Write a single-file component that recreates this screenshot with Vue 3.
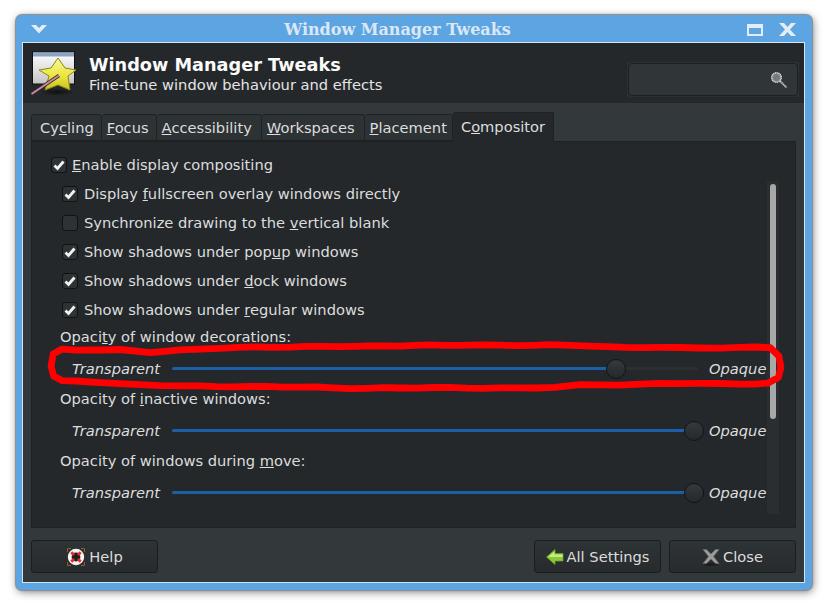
<script setup>
const tabs = [
  ['Cy', 'c', 'ling'],
  ['', 'F', 'ocus'],
  ['', 'A', 'ccessibility'],
  ['', 'W', 'orkspaces'],
  ['', 'P', 'lacement'],
  ['C', 'o', 'mpositor'],
]
const subChecks = [
  { parts: ['Display ', 'f', 'ullscreen overlay windows directly'], on: true },
  { parts: ['Synchronize drawing to the ', 'v', 'ertical blank'], on: false },
  { parts: ['Show shadows under pop', 'u', 'p windows'], on: true },
  { parts: ['Show shadows under ', 'd', 'ock windows'], on: true },
  { parts: ['Show shadows under ', 'r', 'egular windows'], on: true },
]
const sliders = [
  { parts: ['Opaci', 't', 'y of window decorations:'], value: 84.41 },
  { parts: ['Opacity of ', 'i', 'nactive windows:'], value: 99.24 },
  { parts: ['Opacity of windows during ', 'm', 'ove:'], value: 99.24 },
]

// Hand-drawn looking annotation: a base outline with a small deterministic wobble.
const base = [
  [90, 350], [62, 349], [53, 354], [51, 366], [54, 376], [62, 381], [90, 382], [120, 384], [160, 385], [200, 386],
  [250, 387], [300, 387], [350, 388], [400, 388], [450, 388], [500, 388], [555, 387], [580, 385], [620, 385], [660, 384],
  [700, 383], [740, 384], [768, 383], [778, 378], [781, 368], [779, 356], [770, 348], [740, 347], [700, 348], [660, 347],
  [625, 348], [590, 346], [550, 345], [500, 345], [460, 345], [400, 346], [340, 346], [290, 347], [220, 348], [180, 350],
  [150, 352], [120, 350], [90, 350],
]
const points = []
base.slice(1).forEach((p, i) => {
  const q = base[i]
  const steps = Math.max(1, Math.round(Math.hypot(p[0] - q[0], p[1] - q[1]) / 17))
  for (let s = 0; s < steps; s++) {
    const t = s / steps
    const n = points.length
    const x = q[0] + (p[0] - q[0]) * t + Math.sin(n * 2.3) * 0.3
    const y = q[1] + (p[1] - q[1]) * t + Math.sin(n * 1.7) * 0.4 + Math.sin(n * 0.61) * 0.3
    points.push(x.toFixed(1) + ' ' + y.toFixed(1))
  }
})
const markPath = 'M' + points.join('L') + 'Z'
</script>

<template>
  <div class="stage">
    <div class="window">
      <div class="titlebar">
        <svg class="tb-menu" width="16" height="9" viewBox="0 0 16 9"><path d="M0 0h5l3 3 3-3h5L8 8.500z" fill="#e4edf5"/></svg>
        <span class="tb-title">Window Manager Tweaks</span>
        <svg class="tb-max" width="16" height="12" viewBox="0 0 16 12"><path d="M0 0h16v12H0zM2 4v6h12V4z" fill="#e4edf5" fill-rule="evenodd"/></svg>
        <svg class="tb-close" width="17" height="13" viewBox="0 0 17 13"><path d="M0 0h5l3.500 4L12 0h5l-6 6.500 6 6.500h-5L8.500 9 5 13H0l6-6.500z" fill="#e4edf5"/></svg>
      </div>
      <div class="client">
        <header class="head">
          <svg class="head-icon" width="48" height="48" viewBox="0 0 48 48">
            <defs>
              <linearGradient id="pg" x1="0" y1="0" x2="0" y2="1"><stop offset="0" stop-color="#ffffff"/><stop offset="1" stop-color="#c4c4c4"/></linearGradient>
              <linearGradient id="sg" x1="0" y1="0" x2="0" y2="1"><stop offset="0" stop-color="#f8f6a0"/><stop offset=".55" stop-color="#ece63e"/><stop offset="1" stop-color="#c9c21e"/></linearGradient>
              <radialGradient id="sh"><stop offset="0" stop-color="#000" stop-opacity=".6"/><stop offset="1" stop-color="#000" stop-opacity="0"/></radialGradient>
            </defs>
            <ellipse cx="26" cy="41" rx="17" ry="4" fill="url(#sh)"/>
            <rect x="1.500" y="1" width="42" height="32" fill="url(#pg)" stroke="#0e0f10"/>
            <rect x="2" y="1.500" width="41" height="4" fill="#8ba3c4"/>
            <path d="M27 7l7 10 11 2-8 6 2 14-12-5-13 5 4-14-10-6 12-2z" fill="url(#sg)" stroke="#8b8514" stroke-width="1" stroke-linejoin="round"/>
            <path d="M.5 43L28 24.500" stroke="#3a2a30" stroke-width="3.600"/>
            <path d="M.5 43L28 24.500" stroke="#c98ba6" stroke-width="1.800"/>
          </svg>
          <div class="head-text">
            <div class="head-title">Window Manager Tweaks</div>
            <div class="head-sub">Fine-tune window behaviour and effects</div>
          </div>
          <div class="search">
            <div class="search-inner">
              <svg width="18" height="18" viewBox="0 0 18 18">
                <path d="M10 10l6.500 6.500" stroke="#c9c9c9" stroke-width="1.800" stroke-dasharray="1.500 .6"/>
                <circle cx="6.500" cy="6.500" r="4.700" fill="#777b7d" stroke="#d8d8d8" stroke-width="1.600" stroke-dasharray="1.300 .5"/>
              </svg>
            </div>
          </div>
        </header>

        <div class="body">
          <div class="tabs">
            <div v-for="(t, i) in tabs" :key="i" class="tab" :class="{ active: i === 5 }">{{ t[0] }}<u>{{ t[1] }}</u>{{ t[2] }}</div>
          </div>
          <div class="panel">
            <div class="scrollarea">
              <div class="opts">
                <label class="check top">
                  <span class="box"><svg width="14" height="12" viewBox="0 0 14 12"><path d="M2.500 6.500l3 3L11.500 2.500" fill="none" stroke="#f2f2f2" stroke-width="2.800"/></svg></span>
                  <span><u>E</u>nable display compositing</span>
                </label>
                <label v-for="(c, i) in subChecks" :key="i" class="check sub">
                  <span class="box"><svg v-if="c.on" width="14" height="12" viewBox="0 0 14 12"><path d="M2.500 6.500l3 3L11.500 2.500" fill="none" stroke="#f2f2f2" stroke-width="2.800"/></svg></span>
                  <span>{{ c.parts[0] }}<u>{{ c.parts[1] }}</u>{{ c.parts[2] }}</span>
                </label>
                <div v-for="(s, i) in sliders" :key="i" class="group">
                  <div class="group-label">{{ s.parts[0] }}<u>{{ s.parts[1] }}</u>{{ s.parts[2] }}</div>
                  <div class="slider-row">
                    <em class="end left">Transparent</em>
                    <div class="track">
                      <div class="fill" :style="{ width: s.value + '%' }"></div>
                      <div class="thumb" :style="{ left: s.value + '%' }"></div>
                    </div>
                    <em class="end right">Opaque</em>
                  </div>
                </div>
              </div>
              <div class="scrollbar"><div class="sb-thumb"></div></div>
            </div>
          </div>
          <div class="actions">
            <button class="btn">
              <svg width="20" height="20" viewBox="0 0 20 20">
                <path d="M1.500 5V1.500H5M15 1.500h3.500V5M1.500 15v3.500H5M15 18.500h3.500V15" fill="none" stroke="#8f6225"/>
                <circle cx="10" cy="10" r="6.300" fill="#1d1f20" stroke="#f4f4f4" stroke-width="3.800"/>
                <path d="M5.300 5.300l2.700 2.700M14.700 5.300L12 8M5.300 14.700L8 12M14.700 14.700L12 12" stroke="#ee2a2f" stroke-width="3"/>
              </svg>
              <span>Help</span>
            </button>
            <div class="spacer"></div>
            <button class="btn">
              <svg width="18" height="18" viewBox="0 0 18 18">
                <path d="M.5 9L9 1.500V5.500H17V13H9v3.500z" fill="#8ac83a" stroke="#6fa82a" stroke-width=".7"/>
                <path d="M2.500 8.500L8.500 3.500V6.500H16.500V9H3z" fill="#c6ee7e"/>
              </svg>
              <span>All Settings</span>
            </button>
            <button class="btn">
              <svg width="18" height="18" viewBox="0 0 18 18">
                <ellipse cx="9" cy="16.500" rx="7" ry="1.500" fill="#000" opacity=".35"/>
                <path d="M1 1.500h3.500L9 6l4.500-4.500H17L11.500 8.500 17 15.500h-3.500L9 11l-4.500 4.500H1l5.500-7z" fill="#9b9b99" stroke="#6a6a68" stroke-width=".7"/>
              </svg>
              <span>Close</span>
            </button>
          </div>
        </div>
      </div>
    </div>

    <svg class="mark" width="827" height="605" viewBox="0 0 827 605">
      <path :d="markPath" fill="none" stroke="#fe0000" stroke-width="6.800" stroke-linejoin="round"/>
    </svg>
  </div>
</template>

<style scoped>
.stage {
  position: relative;
  width: 827px;
  height: 605px;
  box-sizing: border-box;
  padding: 15px 15px 15px 16px;
  background: #ffffff;
  font-family: "DejaVu Sans", sans-serif;
  font-size: 14.67px;
  color: #dcdddd;
  overflow: hidden;
}
.window {
  width: 796px;
  height: 575px;
  box-sizing: border-box;
  display: flex;
  flex-direction: column;
  background: #5da4e3;
  border-radius: 6px;
  box-shadow: 0 0 1px 1px #8a8a8a, 1px 2px 8px rgba(0, 0, 0, .5);
}
.titlebar {
  height: 28px;
  flex: none;
  display: flex;
  align-items: center;
  padding: 0 17px 0 15px;
}
.tb-title {
  flex: 1;
  text-align: center;
  font-family: "DejaVu Serif", serif;
  font-weight: 700;
  font-size: 16px;
  color: #dbe8f3;
  padding-left: 1px;
}
.tb-menu { margin-top: 1px; }
.tb-max { margin-right: 16px; margin-top: 1px; }
.tb-close { margin-right: -1px; margin-top: 1px; }
.client {
  flex: 1;
  margin: 0 8px 8px 7px;
  outline: 1px solid #d3e4f3;
  display: flex;
  flex-direction: column;
  min-height: 0;
  background: #33383b;
}
.head {
  height: 60px;
  flex: none;
  background: #24282b;
  display: flex;
  align-items: center;
  padding: 0 5px 0 7px;
  box-sizing: border-box;
}
.head-icon { flex: none; margin-top: 4px; margin-left: 1px; }
.head-text { flex: 1; margin-left: 10px; margin-top: 3px; }
.head-title { font-weight: 700; font-size: 17.7px; line-height: 20px; color: #fbfbfb; }
.head-sub { font-size: 14.67px; line-height: 19px; color: #e4e4e4; }
.search {
  width: 172px;
  height: 35px;
  background: #2b3033;
  padding: 1px;
  box-sizing: border-box;
  margin-top: 13px;
}
.search-inner {
  height: 100%;
  box-sizing: border-box;
  background: #303538;
  border: 1px solid #1d2022;
  border-radius: 4px;
  display: flex;
  align-items: center;
  justify-content: flex-end;
  padding: 0 9px 0 0;
}
.body {
  flex: 1;
  min-height: 0;
  display: flex;
  flex-direction: column;
  padding: 8px 8px 9px;
}
.tabs {
  display: flex;
  align-items: flex-end;
  height: 30px;
  flex: none;
  position: relative;
  z-index: 1;
}
.tab {
  height: 27px;
  line-height: 26px;
  padding: 0 7px 0 5px;
  box-sizing: border-box;
  background: #2d3235;
  border: 1px solid #1f2225;
  border-left-width: 0;
  border-bottom-color: #1f2225;
  border-radius: 3px 3px 0 0;
  white-space: nowrap;
}
.tab:first-child { border-left-width: 1px; padding: 0 7px 0 8px; }
.tab:nth-child(3), .tab:nth-child(4) { padding-right: 9px; }
.tab:nth-child(5) { padding-right: 5px; }
.tab.active {
  height: 30px;
  line-height: 28px;
  padding: 0 8px;
  background: #24282b;
  border-bottom-color: #24282b;
  margin-bottom: -1px;
}
.panel {
  flex: 1;
  min-height: 0;
  background: #24282b;
  border: 1px solid #1f2225;
  padding: 13px 16px 13px 19px;
}
.scrollarea {
  height: 100%;
  display: flex;
  position: relative;
  overflow: hidden;
}
.opts { flex: 1; min-width: 0; }
.check {
  display: flex;
  align-items: center;
  height: 29px;
  white-space: nowrap;
}
.top { margin-top: -5px; }
.sub { padding-left: 11px; }
.box {
  width: 14px;
  height: 14px;
  flex: none;
  border: 1px solid #101214;
  border-radius: 3px;
  background: #2d3235;
  display: flex;
  align-items: center;
  justify-content: center;
  margin-right: 6px;
}
.check.top .box { margin-right: 5px; }
.group { padding-left: 9px; }
.group-label { height: 19px; line-height: 17px; margin-top: 4px; }
.group + .group .group-label { margin-top: 0; }
.slider-row {
  display: flex;
  align-items: center;
  height: 43px;
  padding-left: 12px;
}
.end { flex: none; font-style: italic; }
.left { width: 100px; }
.right { width: 58px; text-align: left; margin-left: 11px; }
.track {
  position: relative;
  flex: 1;
  height: 3px;
  background: #2b2f32;
  border-radius: 2px;
}
.fill { height: 100%; background: #1a5fa8; border-radius: 2px 0 0 2px; }
.thumb {
  position: absolute;
  top: 50%;
  width: 18px;
  height: 18px;
  margin-left: -10px;
  margin-top: -10px;
  border-radius: 50%;
  background: linear-gradient(#34393c, #25292c);
  border: 1px solid #121416;
}
.scrollbar {
  width: 12px;
  flex: none;
  margin-top: 26px;
  background: #2a2e31;
  display: flex;
  justify-content: center;
  padding-top: 3px;
  box-sizing: border-box;
}
.sb-thumb { width: 6px; height: 235px; background: #a7a9a8; border-radius: 3px; }
.actions {
  display: flex;
  gap: 8px;
  margin-top: 12px;
  flex: none;
}
.spacer { flex: 1; }
.btn {
  width: 127px;
  height: 33px;
  box-sizing: border-box;
  background: linear-gradient(#2e3336, #272b2e);
  border: 1px solid #1a1d1f;
  border-radius: 3px;
  color: #dcdddd;
  font: inherit;
  display: flex;
  align-items: center;
  justify-content: center;
  gap: 3px;
  padding: 0;
}
.mark {
  position: absolute;
  left: 0;
  top: 0;
  pointer-events: none;
  filter: blur(.5px);
}
</style>
